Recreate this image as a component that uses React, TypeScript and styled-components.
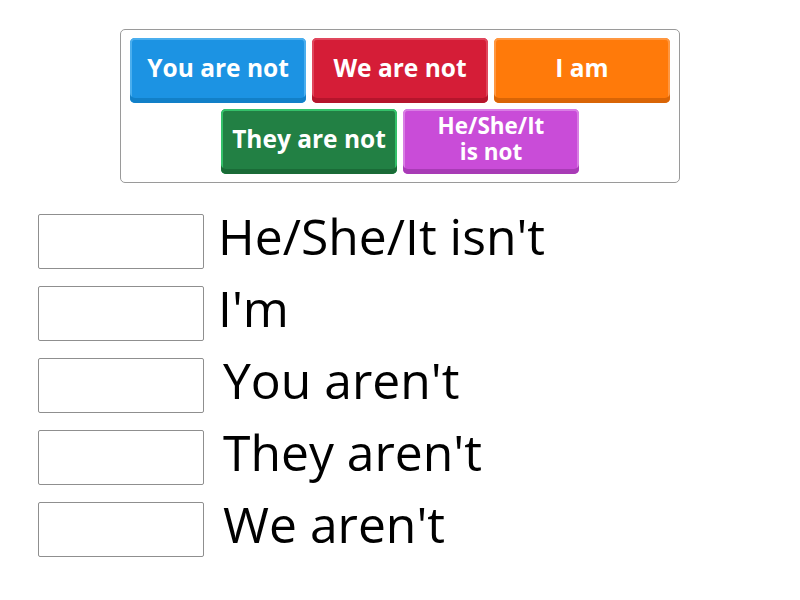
import React from "react";
import styled, { createGlobalStyle } from "styled-components";

const Global = createGlobalStyle`
  html, body { margin: 0; padding: 0; background: #fff; }
  body { font-family: "Open Sans", "Noto Sans", sans-serif; width: 800px; height: 600px; overflow: hidden; }
`;

const Page = styled.div`
  display: flex;
  flex-direction: column;
  align-items: flex-start;
  padding: 29px 0 0 38px;
`;

const Bank = styled.div`
  box-sizing: border-box;
  margin-left: 82px;
  width: 560px;
  padding: 8px;
  border: 1px solid #9a9a9a;
  border-radius: 5px;
  display: flex;
  flex-wrap: wrap;
  justify-content: center;
  gap: 6px 6px;
`;

type Tone = { base: string; light: string; dark: string };

const Tile = styled.div<{ $tone: Tone; $small?: boolean }>`
  box-sizing: border-box;
  width: 176px;
  height: 65px;
  border-radius: 5px;
  background: ${(p) => p.$tone.base};
  box-shadow:
    inset 0 -5px 0 ${(p) => p.$tone.dark},
    inset 0 2px 0 ${(p) => p.$tone.light},
    inset 2px 0 0 ${(p) => p.$tone.light},
    inset -2px 0 0 ${(p) => p.$tone.light};
  color: #fff;
  font-weight: 700;
  font-size: ${(p) => (p.$small ? "22.5px" : "24.5px")};
  line-height: ${(p) => (p.$small ? "26px" : "30px")};
  display: flex;
  align-items: center;
  justify-content: center;
  text-align: center;
  padding: 0 4px 5px;
`;

const Answers = styled.div`
  margin-top: 31px;
  display: flex;
  flex-direction: column;
  gap: 17px;
`;

const Row = styled.div`
  display: flex;
  align-items: flex-start;
  height: 55px;
`;

const Slot = styled.div`
  box-sizing: border-box;
  width: 166px;
  height: 55px;
  border: 1px solid #8f8f8f;
  border-radius: 2px;
  background: #fff;
`;

const Prompt = styled.div<{ $indent: number }>`
  margin-left: ${(p) => p.$indent}px;
  font-size: 49.8px;
  line-height: 44px;
  padding-bottom: 11px;
  color: #000;
  white-space: nowrap;
`;

const tones: Record<string, Tone> = {
  blue: { base: "#1c93e3", light: "#4aaeee", dark: "#1280c8" },
  red: { base: "#d51d37", light: "#e0475d", dark: "#b5152c" },
  orange: { base: "#ff7a0a", light: "#ff9740", dark: "#d96506" },
  green: { base: "#228044", light: "#34c16a", dark: "#1a6b37" },
  purple: { base: "#c94cd8", light: "#d97ee4", dark: "#a83bb6" },
};

const tiles = [
  { text: "You are not", tone: tones.blue },
  { text: "We are not", tone: tones.red },
  { text: "I am", tone: tones.orange },
  { text: "They are not", tone: tones.green },
  { text: "He/She/It is not", tone: tones.purple, small: true },
];

const prompts = [
  { text: "He/She/It isn't", indent: 14 },
  { text: "I'm", indent: 14 },
  { text: "You aren't", indent: 19 },
  { text: "They aren't", indent: 19 },
  { text: "We aren't", indent: 19 },
];

export default function App() {
  return (
    <>
      <Global />
      <Page>
        <Bank>
          {tiles.map((t) => (
            <Tile key={t.text} $tone={t.tone} $small={t.small}>
              {t.small ? (
                <span>
                  He/She/It
                  <br />
                  is not
                </span>
              ) : (
                t.text
              )}
            </Tile>
          ))}
        </Bank>
        <Answers>
          {prompts.map((p) => (
            <Row key={p.text}>
              <Slot />
              <Prompt $indent={p.indent}>{p.text}</Prompt>
            </Row>
          ))}
        </Answers>
      </Page>
    </>
  );
}
